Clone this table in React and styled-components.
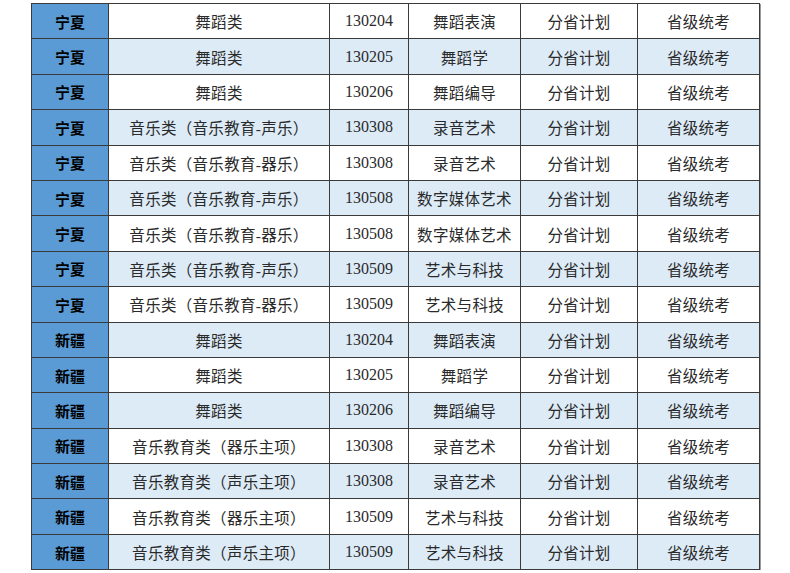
import styled, { createGlobalStyle } from 'styled-components';

const GlobalStyle = createGlobalStyle`
  html, body {
    margin: 0;
    padding: 0;
    background: #ffffff;
  }
`;

const Page = styled.div`
  padding: 3px 0 0 31px;
`;

const Table = styled.table`
  border-collapse: collapse;
  table-layout: fixed;
  width: 728px;
  border: 1px solid #2b2b2b;
  box-shadow: 1px 1px 0 #9a9a9a;
  col:nth-child(1) { width: 77px; }
  col:nth-child(2) { width: 221px; }
  col:nth-child(3) { width: 79px; }
  col:nth-child(4) { width: 112px; }
  col:nth-child(5) { width: 117px; }
  col:nth-child(6) { width: 122px; }
`;

const Row = styled.tr`
  height: 35.4px;
  background: ${(p) => (p.$shaded ? '#ddebf7' : '#ffffff')};
`;

const Cell = styled.td`
  border: 1px solid #3a3a3a;
  padding: 0;
  text-align: center;
  vertical-align: middle;
  color: #2a2a2a;
  font-size: 15.5px;
  letter-spacing: 0.3px;
  font-family: 'Liberation Serif', 'Noto Sans CJK SC', serif;
  white-space: nowrap;
  overflow: hidden;
`;

const ProvinceCell = styled(Cell)`
  background: #5b9bd5;
  color: #000000;
  font-weight: 700;
  font-size: 15px;
  letter-spacing: 0;
  font-family: 'Noto Sans CJK SC', sans-serif;
`;

const CodeCell = styled(Cell)`
  font-size: 16px;
  letter-spacing: 0;
`;

const rows = [
  ['宁夏', '舞蹈类', '130204', '舞蹈表演'],
  ['宁夏', '舞蹈类', '130205', '舞蹈学'],
  ['宁夏', '舞蹈类', '130206', '舞蹈编导'],
  ['宁夏', '音乐类（音乐教育-声乐）', '130308', '录音艺术'],
  ['宁夏', '音乐类（音乐教育-器乐）', '130308', '录音艺术'],
  ['宁夏', '音乐类（音乐教育-声乐）', '130508', '数字媒体艺术'],
  ['宁夏', '音乐类（音乐教育-器乐）', '130508', '数字媒体艺术'],
  ['宁夏', '音乐类（音乐教育-声乐）', '130509', '艺术与科技'],
  ['宁夏', '音乐类（音乐教育-器乐）', '130509', '艺术与科技'],
  ['新疆', '舞蹈类', '130204', '舞蹈表演'],
  ['新疆', '舞蹈类', '130205', '舞蹈学'],
  ['新疆', '舞蹈类', '130206', '舞蹈编导'],
  ['新疆', '音乐教育类（器乐主项）', '130308', '录音艺术'],
  ['新疆', '音乐教育类（声乐主项）', '130308', '录音艺术'],
  ['新疆', '音乐教育类（器乐主项）', '130509', '艺术与科技'],
  ['新疆', '音乐教育类（声乐主项）', '130509', '艺术与科技'],
];

export default function App() {
  return (
    <>
      <GlobalStyle />
      <Page>
        <Table>
          <colgroup>
            <col />
            <col />
            <col />
            <col />
            <col />
            <col />
          </colgroup>
          <tbody>
            {rows.map(([prov, cat, code, major], i) => (
              <Row key={i} $shaded={i % 2 === 1}>
                <ProvinceCell>{prov}</ProvinceCell>
                <Cell>{cat}</Cell>
                <CodeCell>{code}</CodeCell>
                <Cell>{major}</Cell>
                <Cell>分省计划</Cell>
                <Cell>省级统考</Cell>
              </Row>
            ))}
          </tbody>
        </Table>
      </Page>
    </>
  );
}
